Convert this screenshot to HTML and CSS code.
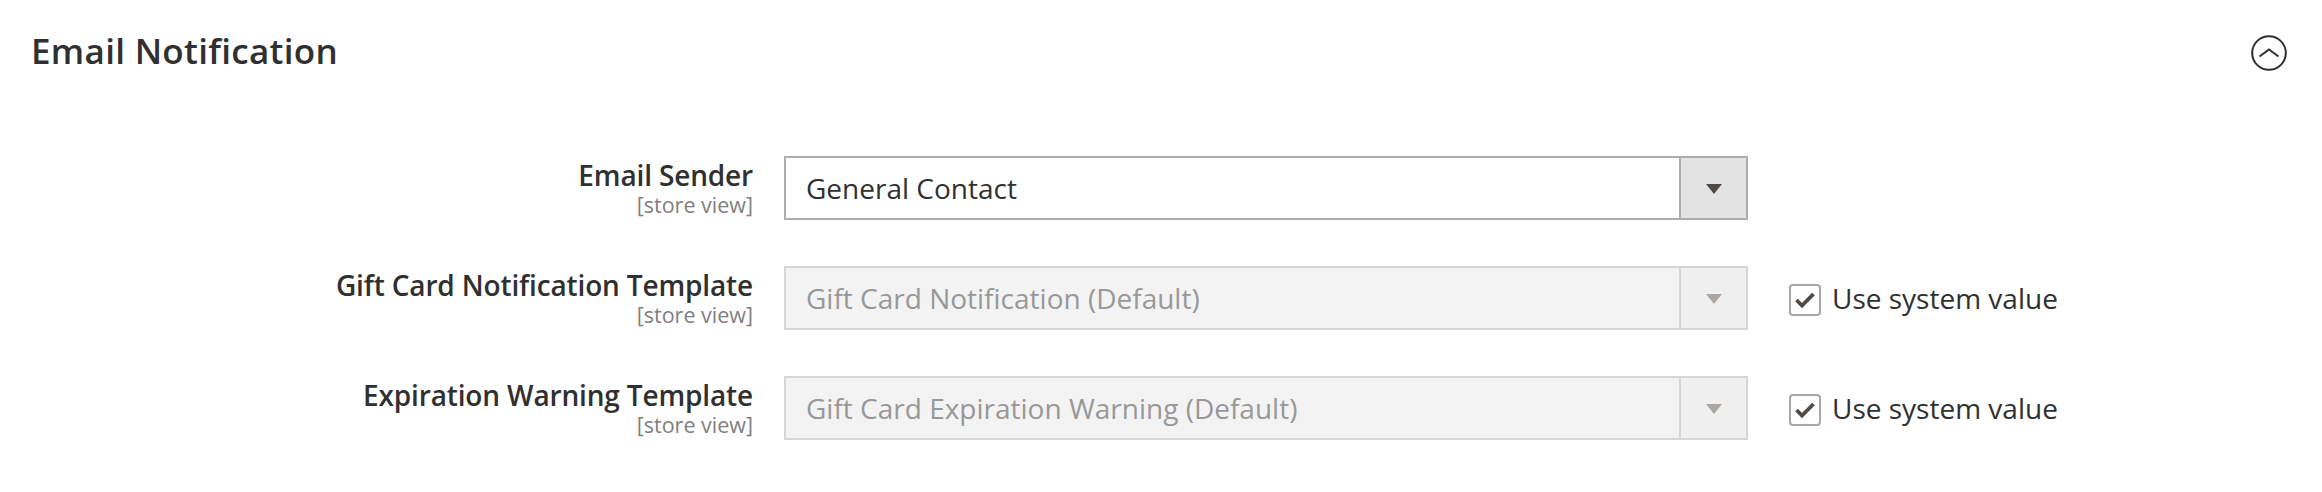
FILE: index.html
```html
<!DOCTYPE html>
<html lang="en">
<head>
<meta charset="utf-8">
<title>Email Notification</title>
<link rel="stylesheet" href="styles.css">
</head>
<body>
<div class="section">
  <div class="section-head">
    <h2 class="section-title">Email Notification</h2>
    <button class="collapse" type="button" aria-label="Collapse">
      <svg width="36" height="36" viewBox="0 0 36 36"><circle cx="18" cy="18" r="16.8" fill="none" stroke="#303030" stroke-width="2"/><polyline points="8.5,21.5 18,14.5 27.5,21.5" fill="none" stroke="#303030" stroke-width="2"/></svg>
    </button>
  </div>
  <div class="fields">
    <div class="field">
      <div class="label"><span class="name">Email Sender</span><span class="scope">[store view]</span></div>
      <div class="select">
        <span class="value">General Contact</span>
        <span class="btn"><span class="arrow"></span></span>
      </div>
    </div>
    <div class="field">
      <div class="label"><span class="name">Gift Card Notification Template</span><span class="scope">[store view]</span></div>
      <div class="select disabled">
        <span class="value">Gift Card Notification (Default)</span>
        <span class="btn"><span class="arrow"></span></span>
      </div>
      <label class="sysval"><span class="box"><svg width="22" height="18" viewBox="0 0 22 18"><polyline points="2.5,9 8,14.5 19.5,3" fill="none" stroke="#514943" stroke-width="3.8"/></svg></span><span class="sysval-text">Use system value</span></label>
    </div>
    <div class="field">
      <div class="label"><span class="name">Expiration Warning Template</span><span class="scope">[store view]</span></div>
      <div class="select disabled">
        <span class="value">Gift Card Expiration Warning (Default)</span>
        <span class="btn"><span class="arrow"></span></span>
      </div>
      <label class="sysval"><span class="box"><svg width="22" height="18" viewBox="0 0 22 18"><polyline points="2.5,9 8,14.5 19.5,3" fill="none" stroke="#514943" stroke-width="3.8"/></svg></span><span class="sysval-text">Use system value</span></label>
    </div>
  </div>
</div>
</body>
</html>
```

FILE: styles.css
```css
html, body {
  margin: 0;
  padding: 0;
  background: #ffffff;
}
body {
  font-family: "Open Sans", "Noto Sans", sans-serif;
  color: #303030;
  width: 2322px;
  height: 492px;
  overflow: hidden;
}
.section-head {
  display: flex;
  justify-content: space-between;
  align-items: flex-start;
  padding: 30px 35px 0 31px;
  height: 41px;
}
.section-title {
  margin: 0;
  font-size: 35px;
  line-height: 41px;
  letter-spacing: 0.3px;
  font-weight: 600;
  color: #303030;
}
.collapse {
  margin-top: 5px;
  padding: 0;
  border: 0;
  background: none;
  width: 36px;
  height: 36px;
  display: block;
}
.collapse svg {
  display: block;
}
.fields {
  display: flex;
  flex-direction: column;
  gap: 46px;
  padding-top: 85px;
}
.field {
  display: flex;
  align-items: flex-start;
  height: 64px;
}
.label {
  width: 753px;
  flex: none;
  text-align: right;
  padding-top: 2px;
  display: flex;
  flex-direction: column;
  align-items: flex-end;
}
.name {
  font-size: 28px;
  line-height: 34px;
  letter-spacing: -0.15px;
  font-weight: 600;
  color: #303030;
}
.scope {
  font-size: 21.5px;
  line-height: 25px;
  color: #808080;
}
.select {
  margin-left: 31px;
  width: 964px;
  height: 64px;
  box-sizing: border-box;
  border: 2px solid #adadad;
  background: #ffffff;
  display: flex;
  flex: none;
}
.value {
  flex: 1;
  padding-left: 20px;
  font-size: 28px;
  line-height: 60px;
  color: #303030;
  white-space: nowrap;
}
.btn {
  width: 65px;
  border-left: 2px solid #adadad;
  background: #e3e3e3;
  display: flex;
  align-items: center;
  justify-content: center;
}
.arrow {
  width: 0;
  height: 0;
  border-left: 8.5px solid transparent;
  border-right: 8.5px solid transparent;
  border-top: 10px solid #514943;
  margin-top: 1px;
}
.select.disabled {
  border-color: #d6d6d6;
  background: #f3f3f3;
}
.select.disabled .value {
  color: #989898;
}
.select.disabled .btn {
  border-left-color: #d6d6d6;
  background: #f0f0f0;
}
.select.disabled .arrow {
  border-top-color: #aba6a2;
}
.sysval {
  margin-left: 41px;
  height: 64px;
  display: flex;
  align-items: center;
  gap: 11px;
}
.box {
  width: 32px;
  height: 32px;
  box-sizing: border-box;
  border: 2px solid #a8a8a8;
  border-radius: 4px;
  background: #ffffff;
  display: flex;
  align-items: center;
  justify-content: center;
  margin-top: 3px;
}
.box svg {
  display: block;
}
.sysval-text {
  font-size: 28px;
  line-height: 34px;
  color: #303030;
}
```
